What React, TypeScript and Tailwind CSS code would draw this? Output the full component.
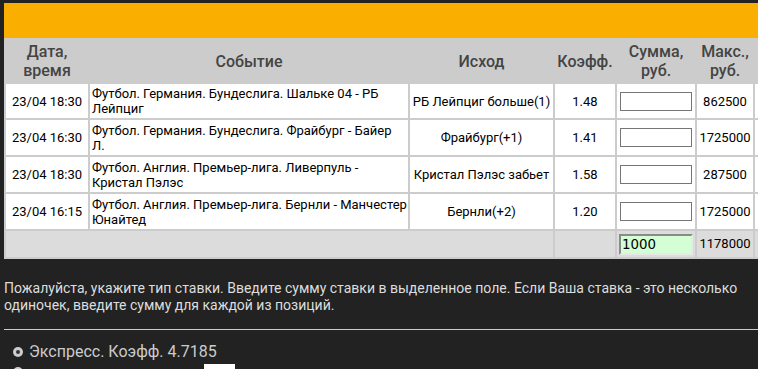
import React from 'react';

type Bet = {
  date: string;
  event: string;
  outcome: string;
  coef: string;
  max: string;
};

const BETS: Bet[] = [
  { date: '23/04 18:30', event: 'Футбол. Германия. Бундеслига. Шальке 04 - РБ Лейпциг', outcome: 'РБ Лейпциг больше(1)', coef: '1.48', max: '862500' },
  { date: '23/04 16:30', event: 'Футбол. Германия. Бундеслига. Фрайбург - Байер\nЛ.', outcome: 'Фрайбург(+1)', coef: '1.41', max: '1725000' },
  { date: '23/04 18:30', event: 'Футбол. Англия. Премьер-лига. Ливерпуль - Кристал Пэлэс', outcome: 'Кристал Пэлэс забьет', coef: '1.58', max: '287500' },
  { date: '23/04 16:15', event: 'Футбол. Англия. Премьер-лига. Бернли - Манчестер Юнайтед', outcome: 'Бернли(+2)', coef: '1.20', max: '1725000' },
];

const headCell = 'flex items-center justify-center text-center text-[16px] font-medium leading-[19px] text-[#444]';
const bodyCell = 'flex items-center bg-white text-[13px] leading-[15px] text-black';

export default function App() {
  return (
    <div className="h-[369px] w-[758px] overflow-hidden bg-[#222] pl-[4px] pt-[3px] font-[Roboto,sans-serif]">
      {/* orange title band */}
      <div className="h-[35px] bg-[#f9ae00]" />

      {/* coupon table */}
      <div className="grid w-max grid-cols-[82px_318px_143px_60px_78px_56px_40px] grid-rows-[42px_34px_35px_35px_35px_26px] gap-[2px] bg-[#ccc] p-[2px]">
        <div className={headCell}>Дата,<br />время</div>
        <div className={headCell}>Событие</div>
        <div className={headCell}>Исход</div>
        <div className={headCell}>Коэфф.</div>
        <div className={headCell}>Сумма,<br />руб.</div>
        <div className={headCell}>Макс.,<br />руб.</div>
        <div className={headCell} />

        {BETS.map((bet, i) => (
          <React.Fragment key={i}>
            <div className={`${bodyCell} justify-center`}>{bet.date}</div>
            <div className={`${bodyCell} whitespace-pre-line pl-[2px]`}>{bet.event}</div>
            <div className={`${bodyCell} justify-center text-center`}>{bet.outcome}</div>
            <div className={`${bodyCell} justify-center`}>{bet.coef}</div>
            <div className={`${bodyCell} pl-[3px]`}>
              <input type="text" className="h-[19px] w-[72px] border border-[#767676] bg-white outline-none" />
            </div>
            <div className={`${bodyCell} justify-center`}>{bet.max}</div>
            <div className={`${bodyCell} pl-[3px]`}>
              <span className="h-[19px] w-[20px] border border-[#767676] bg-[#eee]" />
            </div>
          </React.Fragment>
        ))}

        <div className="col-span-3 bg-[#dcdcdc]" />
        <div className="bg-[#dcdcdc]" />
        <div className="flex items-center bg-[#dcdcdc] pl-[2px]">
          <input
            type="text"
            defaultValue="1000"
            className="h-[21px] w-[74px] border-2 border-t-[#8a8a8a] border-l-[#8a8a8a] border-r-[#e8e8e8] border-b-[#e8e8e8] bg-[#d4ffd4] px-[1px] font-['DejaVu_Sans',sans-serif] text-[13.33px] text-black outline-none"
          />
        </div>
        <div className="flex items-center justify-center bg-[#dcdcdc] text-[13px] text-black">1178000</div>
        <div className="bg-[#dcdcdc]" />
      </div>

      {/* hint */}
      <p className="mt-[21px] w-[754px] text-[14px] leading-[17px] text-[#ddd]">
        Пожалуйста, укажите тип ставки. Введите сумму ставки в выделенное поле. Если Ваша ставка - это несколько одиночек, введите сумму для каждой из позиций.
      </p>

      <div className="mt-[15px] h-px bg-[#ccc]" />

      {/* bet type */}
      <div className="mt-[12px] flex h-[20px] items-center gap-[6px] pl-[9px] text-[16px] text-[#ccc]">
        <span className="flex h-[10px] w-[10px] items-center justify-center rounded-full bg-[#ccc]">
          <span className="h-[4px] w-[4px] rounded-full bg-[#333]" />
        </span>
        <span>Экспресс. Коэфф. 4.7185</span>
      </div>
      <div className="flex h-[20px] items-center pl-[9px]">
        <span className="h-[10px] w-[10px] rounded-full bg-[#ccc]" />
        <input type="text" className="ml-[181px] h-[16px] w-[31px] bg-white outline-none" />
      </div>
    </div>
  );
}
